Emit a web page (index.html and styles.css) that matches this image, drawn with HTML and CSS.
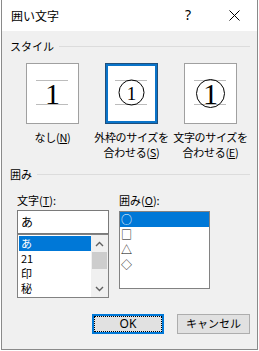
FILE: index.html
```html
<!DOCTYPE html>
<html lang="ja">
<head>
    <meta charset="UTF-8">
    <title>囲い文字</title>
    <link rel="stylesheet" href="styles.css">
</head>
<body>
    <div class="dialog">
        <div class="titlebar">
            <span class="title">囲い文字</span>
            <span class="cap-btn help">?</span>
            <span class="cap-btn close">
                <svg width="11" height="11" viewBox="0 0 11 11"><path d="M0.5 0.5 L10.5 10.5 M10.5 0.5 L0.5 10.5" stroke="#000" stroke-width="1"/></svg>
            </span>
        </div>

        <div class="content">
            <div class="group-head"><span>スタイル</span><i class="rule"></i></div>

            <div class="styles">
                <div class="style-opt">
                    <div class="preview">
                        <svg width="51" height="59" viewBox="0 0 51 59">
                            <path d="M9 16.5 H41 M9 40.5 H41" stroke="#bcbcbc" stroke-width="1"/>
                            <text x="25.5" y="39.5" text-anchor="middle" class="digit">1</text>
                        </svg>
                    </div>
                    <div class="opt-label">なし(<u>N</u>)</div>
                </div>
                <div class="style-opt">
                    <div class="preview selected">
                        <svg width="51" height="59" viewBox="0 0 51 59">
                            <path d="M9 16.5 H41 M9 40.5 H41" stroke="#bcbcbc" stroke-width="1"/>
                            <circle cx="25.5" cy="28.5" r="12.5" fill="none" stroke="#000" stroke-width="1"/>
                            <text x="25.5" y="36" text-anchor="middle" class="digit small">1</text>
                        </svg>
                    </div>
                    <div class="opt-label">外枠のサイズを<br>合わせる(<u>S</u>)</div>
                </div>
                <div class="style-opt">
                    <div class="preview">
                        <svg width="51" height="59" viewBox="0 0 51 59">
                            <path d="M9 16.5 H41 M9 40.5 H41" stroke="#bcbcbc" stroke-width="1"/>
                            <circle cx="25.5" cy="29.5" r="14" fill="none" stroke="#000" stroke-width="1"/>
                            <text x="25.5" y="39.5" text-anchor="middle" class="digit">1</text>
                        </svg>
                    </div>
                    <div class="opt-label">文字のサイズを<br>合わせる(<u>E</u>)</div>
                </div>
            </div>

            <div class="group-head second"><span>囲み</span><i class="rule"></i></div>

            <div class="fields">
                <div class="field field-char">
                    <div class="field-label">文字(<u>T</u>):</div>
                    <div class="textbox">あ</div>
                    <div class="listbox">
                        <ul class="items">
                            <li class="sel">あ</li>
                            <li>21</li>
                            <li>印</li>
                            <li>秘</li>
                        </ul>
                        <div class="scrollbar">
                            <span class="arrow">
                                <svg width="9" height="6" viewBox="0 0 9 6"><path d="M1 5 L4.5 1.5 L8 5" fill="none" stroke="#606060" stroke-width="1.4"/></svg>
                            </span>
                            <span class="thumb"></span>
                            <span class="track"></span>
                            <span class="arrow">
                                <svg width="9" height="6" viewBox="0 0 9 6"><path d="M1 1 L4.5 4.5 L8 1" fill="none" stroke="#606060" stroke-width="1.4"/></svg>
                            </span>
                        </div>
                    </div>
                </div>
                <div class="field field-shape">
                    <div class="field-label">囲み(<u>O</u>):</div>
                    <ul class="listbox shapes">
                        <li class="sel">○</li>
                        <li>□</li>
                        <li>△</li>
                        <li>◇</li>
                    </ul>
                </div>
            </div>

            <div class="buttons">
                <button class="btn default"><span>OK</span></button>
                <button class="btn"><span>キャンセル</span></button>
            </div>
        </div>
    </div>
</body>
</html>
```

FILE: styles.css
```css
* {
    box-sizing: border-box;
    margin: 0;
    padding: 0;
}
body {
    background-color: #ffffff;
    font-family: "Noto Sans CJK JP", "Noto Sans", sans-serif;
    font-size: 11px;
    color: #000000;
}
.dialog {
    margin-left: 1px;
    width: 257px;
    height: 350px;
    border: 1px solid #8a8a8a;
    border-top: none;
    background-color: #f0f0f0;
}
.titlebar {
    height: 31px;
    background-color: #ffffff;
    display: flex;
    align-items: center;
}
.title {
    padding-left: 9px;
    font-size: 12px;
    flex: 1;
}
.cap-btn {
    width: 46px;
    height: 31px;
    display: flex;
    align-items: center;
    justify-content: center;
}
.help {
    font-family: "Noto Sans", sans-serif;
    font-size: 14px;
    padding-bottom: 2px;
}
.close svg {
    display: block;
}

.content {
    padding: 7px 7px 0 8px;
}
.group-head {
    display: flex;
    align-items: center;
    height: 16px;
    line-height: 16px;
}
.group-head .rule {
    flex: 1;
    margin-left: 5px;
    border-top: 1px solid #dcdcdc;
}
.group-head.second {
    margin-top: 6px;
}

.styles {
    display: flex;
    padding-left: 3px;
}
.style-opt {
    width: 80px;
    text-align: center;
}
.preview {
    width: 53px;
    height: 61px;
    margin: 9px auto 0;
    background-color: #ffffff;
    border: 1px solid #a0a0a0;
}
.preview.selected {
    border-color: #1f4f7c;
    box-shadow: inset 0 0 0 2px #0a74c9;
}
.preview svg {
    display: block;
}
.digit {
    font-family: "Liberation Serif", serif;
    font-size: 30px;
}
.digit.small {
    font-size: 19px;
}
.opt-label {
    margin-top: 6px;
    line-height: 15px;
    white-space: nowrap;
    letter-spacing: -0.3px;
}

.fields {
    display: flex;
    align-items: flex-start;
    margin-top: 10px;
    padding-left: 7px;
    gap: 10px;
}
.field-label {
    height: 16px;
    line-height: 16px;
}
.field-char {
    width: 92px;
}
.field-shape {
    width: 91px;
}
.textbox {
    margin-top: 2px;
    height: 24px;
    line-height: 22px;
    padding-left: 3px;
    font-size: 12px;
    background-color: #ffffff;
    border: 1px solid #7a7a7a;
}
.listbox {
    background-color: #ffffff;
    border: 1px solid #828282;
    list-style: none;
}
.field-char .listbox {
    display: flex;
    padding: 1px 0 1px 1px;
}
.items {
    flex: 1;
    list-style: none;
    font-size: 11px;
}
.items li {
    height: 15px;
    line-height: 15px;
    padding-left: 2px;
}
.sel {
    background-color: #0078d7;
    color: #ffffff;
}
.scrollbar {
    width: 17px;
    margin-top: -1px;
    margin-bottom: -1px;
    background-color: #f0f0f0;
    display: flex;
    flex-direction: column;
    align-items: center;
}
.arrow {
    height: 17px;
    display: flex;
    align-items: center;
    justify-content: center;
}
.thumb {
    width: 15px;
    height: 17px;
    background-color: #cdcdcd;
}
.track {
    flex: 1;
}
.shapes {
    margin-top: 3px;
    height: 78px;
    font-size: 11px;
}
.shapes li {
    height: 15px;
    line-height: 15px;
    padding-left: 1px;
}

.buttons {
    display: flex;
    justify-content: flex-end;
    gap: 13px;
    margin-top: 16px;
}
.btn {
    width: 73px;
    height: 20px;
    padding: 1px;
    font-family: "Noto Sans CJK JP", "Noto Sans", sans-serif;
    font-size: 11px;
    background-color: #e1e1e1;
    border: 1px solid #adadad;
    color: #000000;
}
.btn span {
    display: block;
    height: 100%;
    line-height: 14px;
}
.btn.default {
    width: 72px;
    border: 2px solid #0078d7;
    padding: 0;
    font-family: "Noto Sans", sans-serif;
    font-size: 12px;
}
.btn.default span {
    border: 1px dotted #000000;
}
```
